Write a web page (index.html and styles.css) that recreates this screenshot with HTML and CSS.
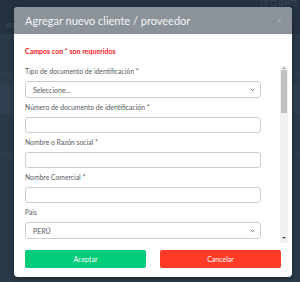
FILE: index.html
```html
<!DOCTYPE html>
<html>
    <head>
        <meta charset="utf-8">
        <title>Clientes</title>
        <link rel="stylesheet" href="styles.css">
    </head>
    <body>
        <div class="page">
            <div class="page-top">
                <span class="page-crumb">gos</span>
                <span class="page-brand">LE CLIENTE</span>
            </div>
            <div class="page-row"></div>
            <div class="page-row dim"></div>
            <div class="page-row"></div>
        </div>

        <div class="modal">
            <div class="modal-header">
                <span class="modal-title">Agregar nuevo cliente / proveedor</span>
                <span class="modal-close">&times;</span>
            </div>
            <div class="modal-body">
                <p class="required-note">Campos con * son requeridos</p>
                <div class="scroll-area">
                    <form class="fields">
                        <label class="field-label">Tipo de documento de identificación *</label>
                        <div class="select-wrap">
                            <select class="field-input field-select">
                                <option>Seleccione...</option>
                            </select>
                            <svg class="chevron" width="5" height="4" viewBox="0 0 5 4"><path d="M0.7 0.9 L2.5 2.7 L4.3 0.9" fill="none" stroke="#666" stroke-width="1"/></svg>
                        </div>
                        <label class="field-label">Número de documento de identificación *</label>
                        <input class="field-input" type="text">
                        <label class="field-label">Nombre o Razón social *</label>
                        <input class="field-input" type="text">
                        <label class="field-label">Nombre Comercial *</label>
                        <input class="field-input" type="text">
                        <label class="field-label">País</label>
                        <div class="select-wrap">
                            <select class="field-input field-select">
                                <option>PERÚ</option>
                            </select>
                            <svg class="chevron" width="5" height="4" viewBox="0 0 5 4"><path d="M0.7 0.9 L2.5 2.7 L4.3 0.9" fill="none" stroke="#666" stroke-width="1"/></svg>
                        </div>
                    </form>
                    <div class="scrollbar">
                        <span class="sb-arrow up"></span>
                        <span class="sb-thumb"></span>
                        <span class="sb-arrow down"></span>
                    </div>
                </div>
                <div class="actions">
                    <button class="btn btn-ok" type="button">Aceptar</button>
                    <button class="btn btn-cancel" type="button">Cancelar</button>
                </div>
            </div>
        </div>
    </body>
</html>
```

FILE: styles.css
```css
* {
box-sizing: border-box;
}
body {
margin: 0;
width: 300px;
height: 282px;
overflow: hidden;
background-color: #2a3a49;
font-family: Lato, "Open Sans", sans-serif;
}
.page-top {
height: 34px;
background-color: #243240;
display: flex;
justify-content: space-between;
align-items: flex-start;
padding: 0 2px 0 6px;
}
.page-crumb {
margin-top: 19px;
font-size: 8px;
color: #3e4e5e;
}
.page-brand {
margin-top: 0;
font-size: 7px;
line-height: 7px;
color: #3b4b5b;
}
.page-row {
height: 30px;
margin-top: 10px;
border-bottom: 1px solid #2f4050;
}
.page-row.dim {
background-color: #2e3f4f;
}
.modal {
position: absolute;
left: 14px;
top: 7px;
width: 278px;
height: 270px;
background-color: white;
border-radius: 4px;
overflow: hidden;
box-shadow: 0 2px 6px rgba(0,0,0,0.3);
}
.modal-header {
height: 27px;
background-color: #8b9299;
display: flex;
align-items: center;
justify-content: space-between;
padding: 0 10px 0 11px;
}
.modal-title {
color: #f5f6f7;
font-size: 11px;
}
.modal-close {
color: #aab0b6;
font-size: 9px;
}
.modal-body {
padding: 12px 4px 9px 11px;
}
.required-note {
margin: 0;
height: 10px;
line-height: 10px;
font-size: 7px;
font-weight: bold;
color: #f01818;
}
.scroll-area {
margin-top: 6px;
height: 181px;
overflow: hidden;
display: flex;
justify-content: space-between;
}
.fields {
width: 236px;
margin: 0;
padding-top: 4px;
display: flex;
flex-direction: column;
}
.field-label {
height: 10px;
line-height: 10px;
font-size: 6.8px;
color: #555b61;
margin-bottom: 5px;
}
.field-input {
width: 236px;
height: 17px;
border: 1px solid #c9ced3;
border-radius: 3px;
background-color: white;
font-family: Lato, "Open Sans", sans-serif;
font-size: 7px;
color: #555b61;
padding: 0 7px;
margin: 0 0 4px 0;
outline: none;
}
.select-wrap {
position: relative;
}
.field-select {
appearance: none;
-webkit-appearance: none;
display: block;
}
.chevron {
position: absolute;
right: 6px;
top: 7px;
}
.scrollbar {
margin-top: 4px;
width: 8px;
background-color: #f1f1f1;
display: flex;
flex-direction: column;
align-items: center;
}
.sb-arrow {
width: 0;
height: 0;
border-left: 2px solid transparent;
border-right: 2px solid transparent;
}
.sb-arrow.up {
margin-top: 1px;
border-bottom: 2px solid #a3a3a3;
}
.sb-arrow.down {
margin-top: auto;
margin-bottom: 4px;
border-top: 2px solid #505050;
}
.sb-thumb {
margin-top: 1px;
width: 6px;
height: 43px;
background-color: #c1c1c1;
}
.actions {
margin-top: 7px;
display: flex;
gap: 14px;
padding-right: 7px;
}
.btn {
width: 121px;
height: 18px;
border: none;
border-radius: 2px;
color: white;
font-family: Lato, "Open Sans", sans-serif;
font-size: 7px;
cursor: pointer;
}
.btn-ok {
background-color: #00cc7a;
}
.btn-cancel {
background-color: #ff3b28;
}
```
